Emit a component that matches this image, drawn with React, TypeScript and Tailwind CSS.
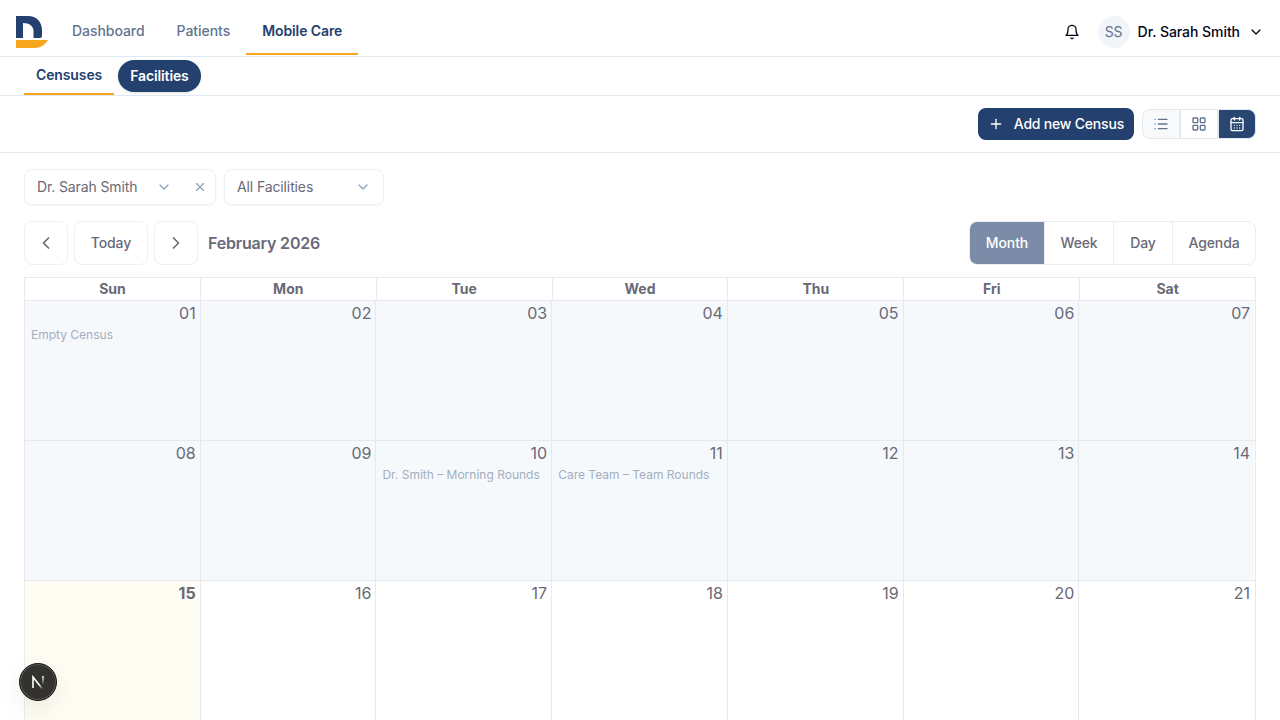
import React from 'react';
import { CalendarDays, ChevronDown, ChevronLeft, ChevronRight, LayoutGrid, List, Plus, X } from 'lucide-react';
import clsx from 'clsx';

interface Day {
  label: string;
  event?: string;
  past?: boolean;
  today?: boolean;
}

const weekdays = ['Sun', 'Mon', 'Tue', 'Wed', 'Thu', 'Fri', 'Sat'];

const events: Record<number, string> = {
  1: 'Empty Census',
  10: 'Dr. Smith – Morning Rounds',
  11: 'Care Team – Team Rounds',
};

const TODAY = 15;

const weeks: Day[][] = [0, 1, 2].map((week) =>
  weekdays.map((_, i) => {
    const date = week * 7 + i + 1;
    return {
      label: String(date).padStart(2, '0'),
      event: events[date],
      past: date < TODAY,
      today: date === TODAY,
    };
  })
);

const Logo = () => (
  <svg width="32" height="32" viewBox="0 0 32 32" fill="none">
    <path d="M0 0H12C20.5 0 26 6 26 14V19.5Q26 22 23.5 22H17.500V15C17.500 10.500 13.500 7 7 7V22H0Z" fill="#23406e" />
    <path d="M0 24H32C29 29 24.500 32 18.500 32H0Z" fill="#f6a61f" />
  </svg>
);

const BellIcon = ({ className }: { className?: string }) => (
  <svg
    className={className}
    viewBox="0 0 24 24"
    fill="none"
    stroke="currentColor"
    strokeWidth="2"
    strokeLinecap="round"
    strokeLinejoin="round"
  >
    <path d="M6 8a6 6 0 0 1 12 0c0 7 3 9 3 9H3s3-2 3-9" />
    <path d="M10.3 21a1.94 1.94 0 0 0 3.4 0" />
  </svg>
);

const Header = () => (
  <header className="flex h-[57px] shrink-0 items-center justify-between border-b border-slate-200 px-4">
    <div className="flex h-full items-center">
      <div className="mt-2 mr-2">
        <Logo />
      </div>
      <nav className="mt-2 flex h-[47px] self-start text-sm font-medium tracking-[-0.05px] text-slate-500">
        <a className="flex items-center border-b-2 border-transparent px-4">Dashboard</a>
        <a className="flex items-center border-b-2 border-transparent px-4">Patients</a>
        <a className="flex items-center border-b-2 border-[#f6a61f] px-4 font-semibold tracking-[-0.1px] text-[#23406e]">
          Mobile Care
        </a>
      </nav>
    </div>
    <div className="mt-2 flex items-center">
      <BellIcon className="mr-[18px] size-4 text-slate-950" />
      <div className="mr-2 flex size-8 items-center justify-center rounded-full bg-slate-100 text-sm text-slate-500">SS</div>
      <span className="mr-2 text-sm font-medium tracking-[-0.05px] text-slate-950">Dr. Sarah Smith</span>
      <ChevronDown className="size-4 text-slate-950" />
    </div>
  </header>
);

const SubNav = () => (
  <div className="flex h-[39px] shrink-0 gap-1 border-b border-slate-200 px-6 text-sm font-semibold tracking-[-0.12px]">
    <a className="flex items-center border-b-2 border-[#f6a61f] px-3 text-[#23406e]">Censuses</a>
    <a className="mt-[3px] flex h-8 items-center rounded-full bg-[#23406e] px-3 text-white shadow-sm">Facilities</a>
  </div>
);

const Toolbar = () => (
  <div className="flex h-[57px] shrink-0 items-center justify-end gap-2 border-b border-slate-200 px-6">
    <button className="flex h-8 items-center gap-2.5 rounded-lg bg-[#23406e] px-2.5 text-sm font-medium tracking-[-0.2px] text-white">
      <Plus className="size-4" />
      Add new Census
    </button>
    <div className="flex h-[30px] text-slate-500">
      <button className="flex w-[38px] items-center justify-center rounded-l-lg border border-slate-200 bg-slate-50">
        <List className="size-4" />
      </button>
      <button className="flex w-[38px] items-center justify-center border border-slate-200 bg-white">
        <LayoutGrid className="size-4" />
      </button>
      <button className="flex w-[38px] items-center justify-center rounded-r-lg border border-slate-200 bg-[#294673] text-white">
        <CalendarDays className="size-4" />
      </button>
    </div>
  </div>
);

const Filters = () => (
  <div className="flex gap-2 text-sm tracking-[-0.12px] text-[#696977]">
    <div className="flex h-9 w-48 items-center rounded-lg border border-[#eeeff5] pr-2 pl-3 shadow-xs">
      <span className="flex-1">Dr. Sarah Smith</span>
      <ChevronDown className="mr-[21px] size-4 text-slate-400" />
      <X className="size-3.5 text-slate-400" />
    </div>
    <div className="flex h-9 w-40 items-center justify-between rounded-lg border border-[#eeeff5] px-3 shadow-xs">
      <span>All Facilities</span>
      <ChevronDown className="size-4 text-slate-400" />
    </div>
  </div>
);

const CalendarNav = () => (
  <div className="mt-4 flex h-11 items-center justify-between text-sm font-medium tracking-[-0.1px] text-[#696977]">
    <div className="flex h-full items-center gap-1.5">
      <button className="flex h-full w-11 items-center justify-center rounded-lg border border-[#eeeff5]">
        <ChevronLeft className="size-5" />
      </button>
      <button className="h-full w-[74px] rounded-lg border border-[#eeeff5]">Today</button>
      <button className="flex h-full w-11 items-center justify-center rounded-lg border border-[#eeeff5]">
        <ChevronRight className="size-5" />
      </button>
      <h2 className="ml-1 text-base font-semibold tracking-[-0.18px]">February 2026</h2>
    </div>
    <div className="flex h-full overflow-hidden rounded-lg border border-[#eaedf3]">
      <button className="w-[74px] bg-[#7b8ba8] text-white">Month</button>
      <button className="w-[69px] border-l border-[#eaedf3]">Week</button>
      <button className="w-[59px] border-l border-[#eaedf3]">Day</button>
      <button className="w-[83px] border-l border-[#eaedf3]">Agenda</button>
    </div>
  </div>
);

const DayCell: React.FC<{ day: Day; first: boolean }> = ({ day, first }) => (
  <div
    className={clsx(
      'min-w-0 flex-1 pr-1 pl-1.5',
      !first && 'border-l border-[#e8e9ec]',
      day.label === '01' && 'bg-[#f7f8fc]',
      day.past && day.label !== '01' && 'bg-[#f5f9fc]',
      day.today && 'bg-[#fffcf4]'
    )}
  >
    <div className={clsx('text-right text-base leading-6', day.today && 'font-bold')}>{day.label}</div>
    {day.event && <div className="truncate text-xs leading-[19px] text-[#a3afc1]">{day.event}</div>}
  </div>
);

const MonthGrid = () => (
  <div className="mt-3 border border-[#e8e9ec] text-[#696977]">
    <div className="flex h-[23px] border-b border-[#e8e9ec]">
      {weekdays.map((name, i) => (
        <div
          key={name}
          className={clsx('flex-1 text-center text-sm leading-[22px] font-bold', i > 0 && 'border-l border-[#e8e9ec]')}
        >
          {name}
        </div>
      ))}
    </div>
    {weeks.map((week) => (
      <div key={week[0].label} className="flex h-[140px] border-b border-[#e8e9ec] pr-px">
        {week.map((day, i) => (
          <DayCell key={day.label} day={day} first={i === 0} />
        ))}
      </div>
    ))}
  </div>
);

export default function App() {
  return (
    <div className="relative flex h-screen flex-col overflow-hidden bg-white font-['Inter',sans-serif]">
      <Header />
      <SubNav />
      <Toolbar />
      <main className="min-h-0 flex-1 overflow-hidden px-6 pt-4">
        <Filters />
        <CalendarNav />
        <MonthGrid />
      </main>
      {/* dev tools badge */}
      <div className="absolute bottom-[19px] left-[19px] flex size-[38px] items-center justify-center rounded-full border border-[#171717] bg-[#33322f] shadow-[inset_0_0_0_1px_#5a5955,0_8px_24px_rgba(0,0,0,0.08)]">
        <svg width="14" height="14" viewBox="0 0 14 14" fill="none" strokeWidth="1.6">
          <defs>
            <linearGradient id="diag" x1="7" y1="7" x2="12" y2="14" gradientUnits="userSpaceOnUse">
              <stop offset="0.3" stopColor="#fff" />
              <stop offset="1" stopColor="#fff" stopOpacity="0" />
            </linearGradient>
            <linearGradient id="stem" x1="11" y1="1" x2="11" y2="10" gradientUnits="userSpaceOnUse">
              <stop stopColor="#fff" />
              <stop offset="1" stopColor="#fff" stopOpacity="0" />
            </linearGradient>
          </defs>
          <path d="M2 13V2L11.500 14" stroke="url(#diag)" />
          <path d="M12 1V10" stroke="url(#stem)" />
        </svg>
      </div>
    </div>
  );
}
